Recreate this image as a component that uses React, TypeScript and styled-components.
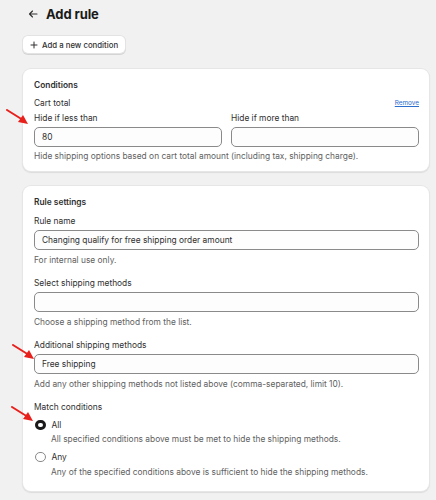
import React from 'react';
import styled, { createGlobalStyle } from 'styled-components';

const GlobalStyle = createGlobalStyle`
  html, body {
    margin: 0;
    background: #f1f1f1;
    font-family: Inter, "Noto Sans", sans-serif;
    color: #303030;
  }
`;

const Page = styled.div`
  position: relative;
  width: 436px;
  height: 500px;
  overflow: hidden;
  padding: 5px 7px 0 23px;
  box-sizing: border-box;
  display: flex;
  flex-direction: column;
`;

const Header = styled.header`
  display: flex;
  align-items: center;
  gap: 8px;
  height: 18px;
  padding-left: 5px;
`;

const Title = styled.h1`
  margin: 0;
  font-size: 13px;
  font-weight: 700;
  letter-spacing: -0.1px;
  color: #1a1a1a;
`;

const AddButton = styled.button`
  align-self: flex-start;
  margin-top: 13px;
  height: 17px;
  display: flex;
  align-items: center;
  gap: 4px;
  padding: 0 7px;
  border: none;
  border-radius: 5px;
  background: #fff;
  box-shadow: 0 0 0 1px #e3e3e3, 0 1px 0 1px #d4d4d4;
  font-family: inherit;
  font-size: 7.8px;
  font-weight: 500;
  color: #303030;
`;

const Card = styled.section<{ $top: number; $bottom: number }>`
  margin-top: ${(p) => p.$top}px;
  background: #fff;
  border-radius: 8px;
  box-shadow: 0 0 0 1px #e6e6e6, 0 1px 1px 1px #dcdcdc;
  padding: 10px 10px ${(p) => p.$bottom}px 11px;
  display: flex;
  flex-direction: column;
`;

const CardTitle = styled.h2`
  margin: 0;
  font-size: 8.4px;
  line-height: 12px;
  font-weight: 600;
  color: #303030;
`;

const Label = styled.div<{ $mt?: number }>`
  font-size: 8.4px;
  color: #303030;
  line-height: 12px;
  margin-top: ${(p) => p.$mt ?? 0}px;
`;

const LabelRow = styled.div`
  display: flex;
  justify-content: space-between;
  align-items: center;
  margin-top: 6px;
`;

const RemoveLink = styled.a`
  font-size: 6.4px;
  color: #2c6ecb;
  text-decoration: underline;
`;

const Pair = styled.div`
  display: grid;
  grid-template-columns: 1fr 1fr;
  gap: 9px;
  margin-top: 3px;
`;

const Field = styled.div`
  display: flex;
  flex-direction: column;
  gap: 3px;
`;

const Input = styled.div<{ $mt?: number }>`
  height: 20px;
  margin-top: ${(p) => p.$mt ?? 0}px;
  box-sizing: border-box;
  border: 1px solid #8a8a8a;
  border-radius: 5px;
  background: #fdfdfd;
  display: flex;
  align-items: center;
  padding: 0 7px;
  font-size: 8.4px;
  color: #303030;
`;

const Help = styled.div<{ $mt?: number }>`
  font-size: 8.4px;
  color: #616161;
  line-height: 12px;
  margin-top: ${(p) => p.$mt ?? 3}px;
`;

const RadioRow = styled.div<{ $mt: number }>`
  display: flex;
  align-items: center;
  gap: 6px;
  margin-top: ${(p) => p.$mt}px;
  height: 12px;
  padding-left: 1px;
`;

const Radio = styled.span<{ $checked?: boolean }>`
  width: 10.5px;
  height: 10.5px;
  box-sizing: border-box;
  border-radius: 50%;
  border: ${(p) => (p.$checked ? '3.2px solid #1a1a1a' : '1px solid #8a8a8a')};
  background: #fff;
`;

const RadioHelp = styled(Help)`
  margin-left: 17px;
`;

const Arrow = styled.svg`
  position: absolute;
  width: 24px;
  height: 16px;
`;

function RedArrow({ x, y }: { x: number; y: number }) {
  return (
    <Arrow viewBox="0 0 24 16" style={{ left: x, top: y }}>
      <line x1="1" y1="1" x2="17" y2="11" stroke="#e8201c" strokeWidth="2" strokeLinecap="round" />
      <polygon points="22,15 12,13 17,6" fill="#e8201c" />
    </Arrow>
  );
}

export default function App() {
  return (
    <Page>
      <GlobalStyle />
      <Header>
        <svg width="10" height="10" viewBox="0 0 10 10">
          <path d="M9 5H1.5M4.5 2L1.5 5l3 3" fill="none" stroke="#303030" strokeWidth="1.1" strokeLinecap="round" strokeLinejoin="round" />
        </svg>
        <Title>Add rule</Title>
      </Header>
      <AddButton>
        <svg width="8" height="8" viewBox="0 0 8 8">
          <path d="M4 1v6M1 4h6" stroke="#303030" strokeWidth="1" strokeLinecap="round" />
        </svg>
        Add a new condition
      </AddButton>

      <Card $top={16} $bottom={9}>
        <CardTitle>Conditions</CardTitle>
        <LabelRow>
          <Label>Cart total</Label>
          <RemoveLink>Remove</RemoveLink>
        </LabelRow>
        <Pair>
          <Field>
            <Label>Hide if less than</Label>
            <Input>80</Input>
          </Field>
          <Field>
            <Label>Hide if more than</Label>
            <Input />
          </Field>
        </Pair>
        <Help>Hide shipping options based on cart total amount (including tax, shipping charge).</Help>
      </Card>

      <Card $top={15} $bottom={13}>
        <CardTitle>Rule settings</CardTitle>
        <Label $mt={7}>Rule name</Label>
        <Input $mt={3}>Changing qualify for free shipping order amount</Input>
        <Help $mt={4}>For internal use only.</Help>

        <Label $mt={11}>Select shipping methods</Label>
        <Input $mt={3} />
        <Help $mt={4}>Choose a shipping method from the list.</Help>

        <Label $mt={11}>Additional shipping methods</Label>
        <Input $mt={3}>Free shipping</Input>
        <Help $mt={4}>Add any other shipping methods not listed above (comma-separated, limit 10).</Help>

        <Label $mt={11}>Match conditions</Label>
        <RadioRow $mt={6}>
          <Radio $checked />
          <Label>All</Label>
        </RadioRow>
        <RadioHelp $mt={2}>All specified conditions above must be met to hide the shipping methods.</RadioHelp>
        <RadioRow $mt={6}>
          <Radio />
          <Label>Any</Label>
        </RadioRow>
        <RadioHelp $mt={3}>Any of the specified conditions above is sufficient to hide the shipping methods.</RadioHelp>
      </Card>

      <RedArrow x={6} y={109} />
      <RedArrow x={12} y={344} />
      <RedArrow x={11} y={406} />
    </Page>
  );
}
